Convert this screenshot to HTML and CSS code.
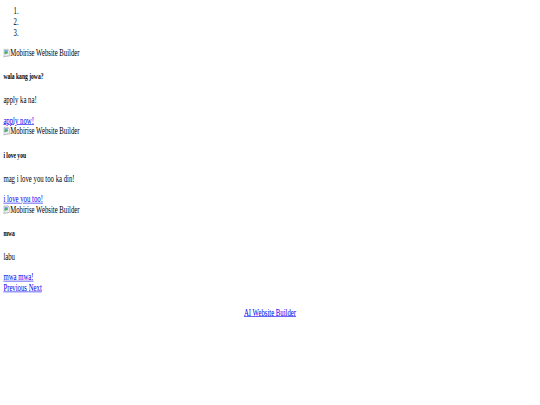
FILE: index.html
```html
<!DOCTYPE html>
<html lang="tl">
<head>
<meta charset="utf-8">
<title>Mobirise</title>
<link rel="stylesheet" href="styles.css">
</head>
<body>
<div class="viewport">
<div class="page">
  <section class="slider">
    <ol class="indicators"><li></li><li></li><li></li></ol>
    <div class="inner">
      <div class="item">
        <div class="pic"><svg class="broken" viewBox="0 0 16 16" width="16" height="16" aria-hidden="true"><path d="M1 1h10l4 4v6l-2 2-2-1.5-2 2-2-1.5-2 2-2-1.5-2 2z" fill="#e8eef5" stroke="#8c8c8c"/><path d="M2.5 2.5h8v4h-8z" fill="#7fb0e0"/><path d="M2.5 6.5l3-2.5 2.5 2 2.5-1.5v3l-2 1.5-2-1-2 1.5-2-1z" fill="#4caf50"/></svg>Mobirise Website Builder</div>
        <div class="caption">
          <h5>wala kang jowa?</h5>
          <p>apply ka na!</p>
          <div><a href="#">apply now!</a></div>
        </div>
      </div>
      <div class="item">
        <div class="pic"><svg class="broken" viewBox="0 0 16 16" width="16" height="16" aria-hidden="true"><path d="M1 1h10l4 4v6l-2 2-2-1.5-2 2-2-1.5-2 2-2-1.5-2 2z" fill="#e8eef5" stroke="#8c8c8c"/><path d="M2.5 2.5h8v4h-8z" fill="#7fb0e0"/><path d="M2.5 6.5l3-2.5 2.5 2 2.5-1.5v3l-2 1.5-2-1-2 1.5-2-1z" fill="#4caf50"/></svg>Mobirise Website Builder</div>
        <div class="caption">
          <h5>i love you</h5>
          <p>mag i love you too ka din!</p>
          <div><a href="#">i love you too!</a></div>
        </div>
      </div>
      <div class="item">
        <div class="pic"><svg class="broken" viewBox="0 0 16 16" width="16" height="16" aria-hidden="true"><path d="M1 1h10l4 4v6l-2 2-2-1.5-2 2-2-1.5-2 2-2-1.5-2 2z" fill="#e8eef5" stroke="#8c8c8c"/><path d="M2.5 2.5h8v4h-8z" fill="#7fb0e0"/><path d="M2.5 6.5l3-2.5 2.5 2 2.5-1.5v3l-2 1.5-2-1-2 1.5-2-1z" fill="#4caf50"/></svg>Mobirise Website Builder</div>
        <div class="caption">
          <h5>mwa</h5>
          <p>labu</p>
          <div><a href="#">mwa mwa!</a></div>
        </div>
      </div>
    </div>
    <a href="#">Previous </a><a href="#">Next</a>
  </section>
  <section class="footer">
    <a href="#">AI Website Builder</a>
  </section>
</div>
</div>
</body>
</html>
```
FILE: styles.css
```css
html, body {
  margin: 0;
  padding: 0;
  background: #ffffff;
  overflow: hidden;
}
.viewport {
  width: 540px;
  height: 405px;
  overflow: hidden;
}
.page {
  width: 1280px;
  height: 675px;
  box-sizing: border-box;
  padding: 10px 8px 8px;
  transform: scale(0.421875, 0.6);
  transform-origin: 0 0;
  font-family: "Liberation Serif", "Times New Roman", serif;
  font-size: 16px;
  color: #000000;
}
a {
  color: #0000ee;
  text-decoration: underline;
}
.indicators {
  margin: 0 0 16px;
  padding-left: 40px;
}
.broken {
  vertical-align: -3px;
}
.caption h5 {
  font-size: 0.83em;
  font-weight: bold;
  margin: 1.67em 0;
}
.caption p {
  margin: 16px 0;
}
.footer {
  display: flex;
  flex-wrap: wrap;
  align-items: center;
  align-content: center;
  justify-content: center;
  height: 64px;
}
```
